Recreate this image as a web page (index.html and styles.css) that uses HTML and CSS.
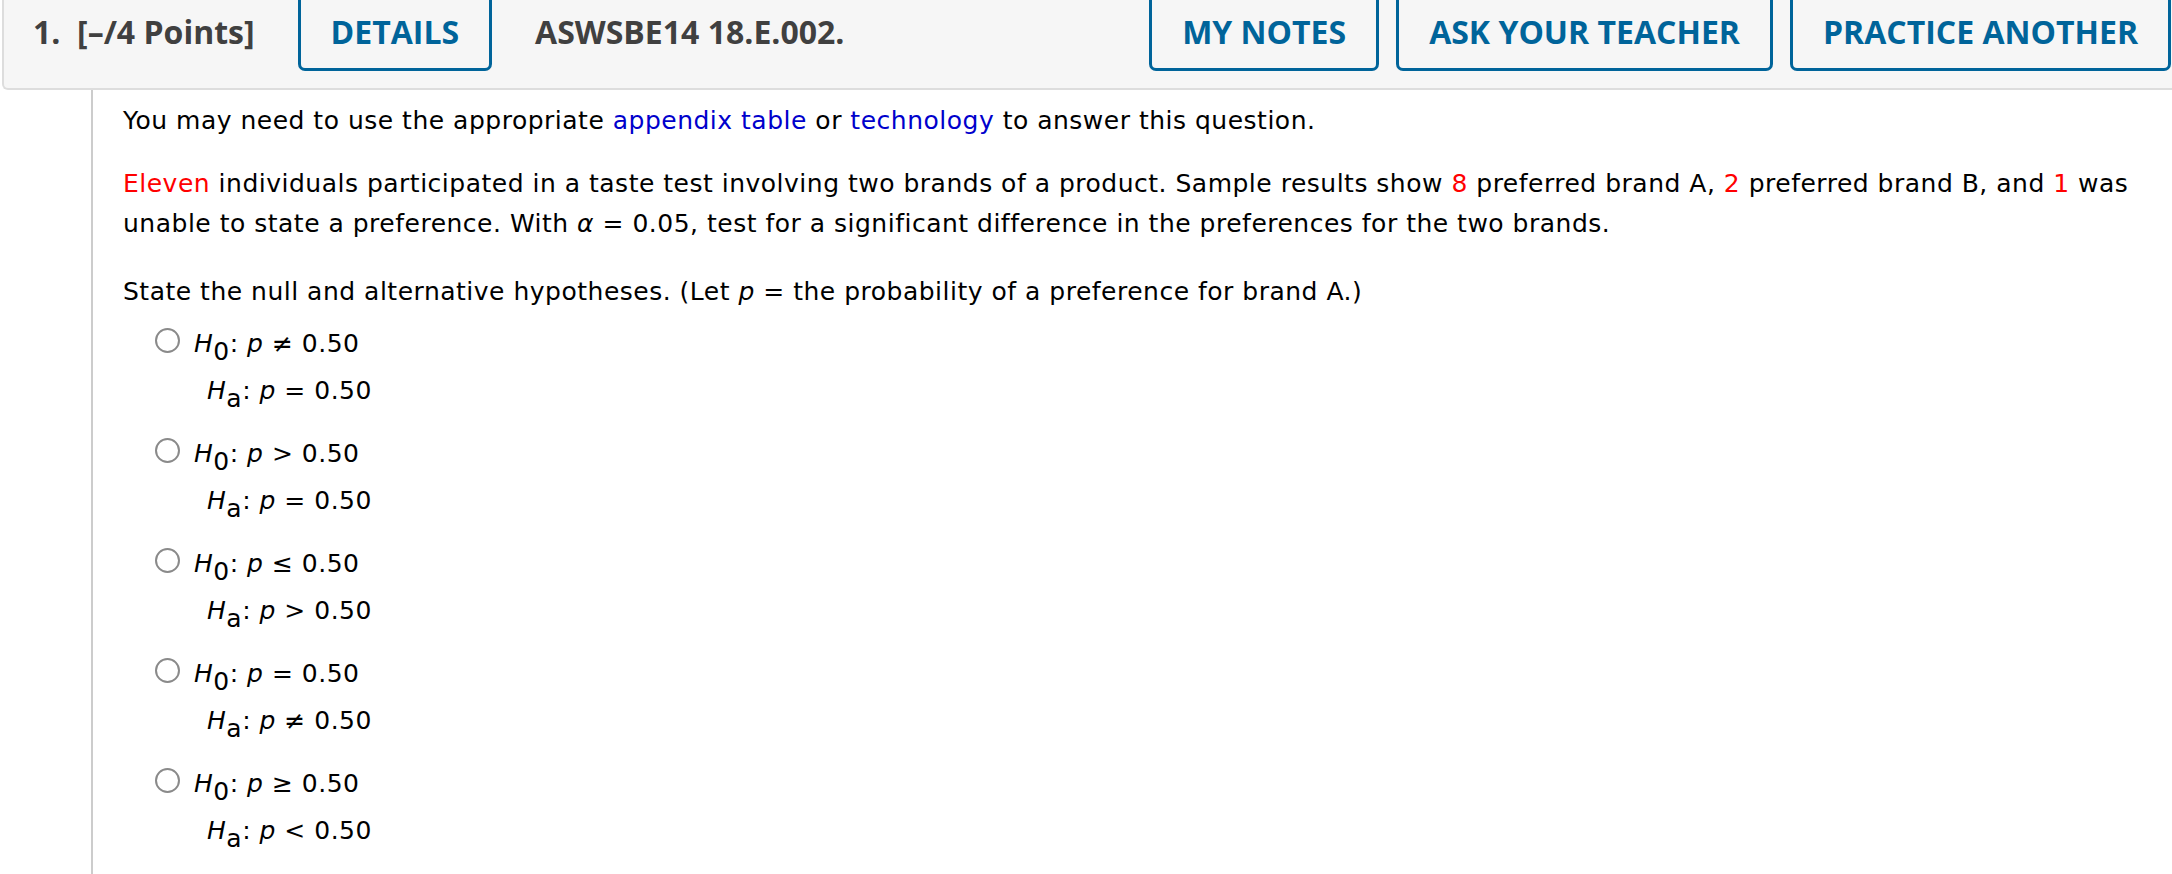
FILE: index.html
```html
<!DOCTYPE html>
<html lang="en">
<head>
<meta charset="utf-8">
<title>Question 1</title>
<link rel="stylesheet" href="styles.css">
</head>
<body>
<div class="question">
  <header class="qhead">
    <div class="qhead-left">
      <span class="qnum">1.&nbsp; [–/4 Points]</span>
      <button class="qbtn" type="button">DETAILS</button>
      <span class="qcode">ASWSBE14 18.E.002.</span>
    </div>
    <div class="qhead-right">
      <button class="qbtn" type="button">MY NOTES</button>
      <button class="qbtn" type="button">ASK YOUR TEACHER</button>
      <button class="qbtn" type="button">PRACTICE ANOTHER</button>
    </div>
  </header>
  <div class="qbody">
    <p class="note">You may need to use the appropriate <a class="link" href="#">appendix table</a> or <a class="link" href="#">technology</a> to answer this question.</p>
    <p class="stem"><span class="red">Eleven</span> individuals participated in a taste test involving two brands of a product. Sample results show <span class="red">8</span> preferred brand A, <span class="red">2</span> preferred brand B, and <span class="red">1</span> was unable to state a preference. With <i class="mi">α</i> = 0.05, test for a significant difference in the preferences for the two brands.</p>
    <p class="prompt">State the null and alternative hypotheses. (Let <i class="mi">p</i> = the probability of a preference for brand A.)</p>
    <ul class="choices">
      <li class="choice">
        <span class="radio"></span>
        <div class="hyp">
          <div class="h0"><i class="mi">H</i><sub class="sb">0</sub>: <i class="mi">p</i> ≠ 0.50</div>
          <div class="ha"><i class="mi">H</i><sub class="sb">a</sub>: <i class="mi">p</i> = 0.50</div>
        </div>
      </li>
      <li class="choice">
        <span class="radio"></span>
        <div class="hyp">
          <div class="h0"><i class="mi">H</i><sub class="sb">0</sub>: <i class="mi">p</i> &gt; 0.50</div>
          <div class="ha"><i class="mi">H</i><sub class="sb">a</sub>: <i class="mi">p</i> = 0.50</div>
        </div>
      </li>
      <li class="choice">
        <span class="radio"></span>
        <div class="hyp">
          <div class="h0"><i class="mi">H</i><sub class="sb">0</sub>: <i class="mi">p</i> ≤ 0.50</div>
          <div class="ha"><i class="mi">H</i><sub class="sb">a</sub>: <i class="mi">p</i> &gt; 0.50</div>
        </div>
      </li>
      <li class="choice">
        <span class="radio"></span>
        <div class="hyp">
          <div class="h0"><i class="mi">H</i><sub class="sb">0</sub>: <i class="mi">p</i> = 0.50</div>
          <div class="ha"><i class="mi">H</i><sub class="sb">a</sub>: <i class="mi">p</i> ≠ 0.50</div>
        </div>
      </li>
      <li class="choice">
        <span class="radio"></span>
        <div class="hyp">
          <div class="h0"><i class="mi">H</i><sub class="sb">0</sub>: <i class="mi">p</i> ≥ 0.50</div>
          <div class="ha"><i class="mi">H</i><sub class="sb">a</sub>: <i class="mi">p</i> &lt; 0.50</div>
        </div>
      </li>
    </ul>
  </div>
</div>
</body>
</html>
```
FILE: styles.css
```css
html, body {
  margin: 0;
  padding: 0;
  background: #ffffff;
}

body {
  font-family: "DejaVu Sans", Verdana, sans-serif;
  color: #000000;
  overflow: hidden;
}

.qhead {
  display: flex;
  justify-content: space-between;
  align-items: flex-start;
  margin: -10px 0 0 2px;
  padding: 0 1px 17px 29px;
  background: #f6f6f6;
  border-left: 2px solid #dddddd;
  border-bottom: 2px solid #dddddd;
  border-bottom-left-radius: 6px;
  font-family: "Open Sans", "DejaVu Sans", sans-serif;
  font-weight: 700;
  font-size: 32px;
  line-height: 44px;
  color: #404040;
}

.qhead-left,
.qhead-right {
  display: flex;
  align-items: flex-start;
}

.qhead-left {
  gap: 43px;
}

.qhead-right {
  gap: 17px;
}

.qnum,
.qcode {
  padding-top: 20px;
  white-space: nowrap;
}

.qbtn {
  font: inherit;
  color: #00649a;
  background: transparent;
  border: 3px solid #00649a;
  border-radius: 0 0 7px 7px;
  padding: 17px 30px 14px;
  line-height: 44px;
  white-space: nowrap;
  cursor: pointer;
}

.qbody {
  margin-left: 91px;
  border-left: 2px solid #cccccc;
  padding: 11px 10px 0 30px;
  min-height: 800px;
  font-size: 25px;
  letter-spacing: 0.5px;
  line-height: 40px;
}

.qbody p {
  margin: 0;
}

.note {
  margin-bottom: 23px !important;
}

.stem {
  margin-bottom: 28px !important;
}

.link {
  color: #0000cc;
  text-decoration: none;
}

.red {
  color: #ff0000;
}

.mi {
  font-style: italic;
}

.choices {
  list-style: none;
  margin: 8px 0 0;
  padding: 0 0 0 33px;
}

.choice {
  display: flex;
  align-items: flex-start;
  line-height: 47px;
  margin-bottom: 16px;
}

.radio {
  flex: none;
  width: 25px;
  height: 25px;
  box-sizing: border-box;
  border: 2px solid #8a8a8a;
  border-radius: 50%;
  background: #ffffff;
  margin: 8px 14px 0 -1px;
}

.sb {
  font-size: 1em;
  vertical-align: -8px;
  line-height: 0;
}

.ha {
  padding-left: 13px;
}
```
